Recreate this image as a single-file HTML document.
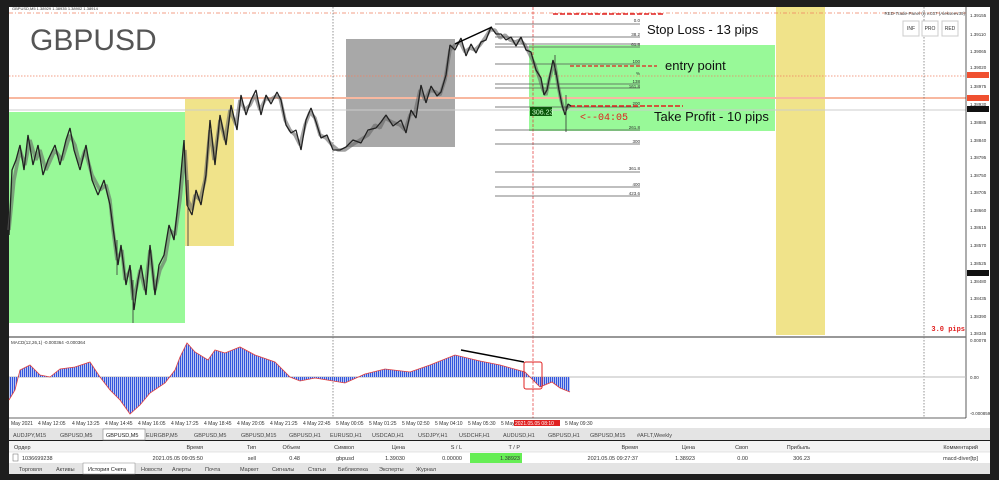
<!DOCTYPE html>
<html><head><meta charset="utf-8"><style>
body{margin:0;width:999px;height:480px;overflow:hidden;background:#1e1e1e;font-family:"Liberation Sans",sans-serif}
svg{position:absolute;left:0;top:0}
</style></head><body>
<svg width="999" height="480" viewBox="0 0 999 480" xmlns="http://www.w3.org/2000/svg" font-family="Liberation Sans, sans-serif">
<defs>
<pattern id="hs" width="2" height="10" patternUnits="userSpaceOnUse"><rect width="1.1" height="10" fill="#3355dd"/><rect x="1.1" width="0.9" height="10" fill="#b5c3f2"/></pattern>
</defs>
<rect x="0" y="0" width="999" height="480" fill="#1e1e1e"/>
<rect x="9" y="7" width="981" height="421" fill="#fff"/>
<rect x="9" y="112" width="176" height="211" fill="#98f998"/>
<rect x="185" y="98" width="49" height="148" fill="#f0e38a"/>
<rect x="346" y="39" width="109" height="108" fill="#a8a8a8"/>
<rect x="529" y="45" width="246" height="86" fill="#98f998"/>
<rect x="776" y="7" width="49" height="328" fill="#f0e38a"/>
<line x1="9" y1="13" x2="966" y2="13" stroke="#f08060" stroke-width="0.8" stroke-dasharray="4,2,1,2"/>
<line x1="9" y1="76" x2="966" y2="76" stroke="#f08060" stroke-width="0.8" stroke-dasharray="1.5,1.5"/>
<line x1="9" y1="98" x2="966" y2="98" stroke="#f8b8a0" stroke-width="2"/>
<line x1="9" y1="110" x2="966" y2="110" stroke="#cccccc" stroke-width="1"/>
<line x1="333" y1="7" x2="333" y2="418" stroke="#666" stroke-width="0.7" stroke-dasharray="1.5,1.5"/>
<line x1="924" y1="7" x2="924" y2="418" stroke="#666" stroke-width="0.7" stroke-dasharray="1.5,1.5"/>
<line x1="533" y1="7" x2="533" y2="418" stroke="#e03030" stroke-width="0.7" stroke-dasharray="3,1.5"/>
<g stroke="#555" stroke-width="0.8">
<line x1="495" y1="24" x2="640" y2="24"/><line x1="495" y1="37" x2="640" y2="37"/><line x1="495" y1="44" x2="640" y2="44"/><line x1="495" y1="47" x2="640" y2="47"/><line x1="495" y1="64" x2="640" y2="64"/><line x1="495" y1="84" x2="640" y2="84"/><line x1="495" y1="88" x2="640" y2="88"/><line x1="495" y1="107" x2="640" y2="107"/><line x1="495" y1="130" x2="640" y2="130"/><line x1="495" y1="144" x2="640" y2="144"/><line x1="495" y1="172" x2="640" y2="172"/><line x1="495" y1="187" x2="640" y2="187"/><line x1="495" y1="196" x2="640" y2="196"/>
</g>
<g font-size="4.5" fill="#333" text-anchor="end">
<text x="640" y="22">0.0</text><text x="640" y="36">38.2</text><text x="640" y="46">61.8</text><text x="640" y="63">100</text><text x="640" y="75">%</text><text x="640" y="83">138</text><text x="640" y="88">161.8</text><text x="640" y="105">200</text><text x="640" y="129">261.8</text><text x="640" y="143">300</text><text x="640" y="170">361.8</text><text x="640" y="186">400</text><text x="640" y="195">423.6</text>
</g>
<line x1="553" y1="14" x2="665" y2="14" stroke="#e02020" stroke-width="1.6" stroke-dasharray="5,2"/>
<line x1="570" y1="66" x2="657" y2="66" stroke="#e02020" stroke-width="1.2" stroke-dasharray="4,2"/>
<line x1="570" y1="106" x2="683" y2="106" stroke="#e02020" stroke-width="1.6" stroke-dasharray="5,2"/>
<g fill="none" stroke-linejoin="bevel">
<polyline stroke="#666" stroke-width="3.5" opacity="0.6" points="9,230 14,180 20,150 25,165 30,140 36,160 40,150 46,170 55,150 62,160 70,135 75,145 80,165 85,150 92,175 100,190 106,185 110,200 113,230 117,260 122,250 125,280 130,270 133,300 137,285 140,270 145,290 150,250 155,290 160,270 165,260 170,230 175,235 180,200 185,150 188,200 192,210 195,195 200,200 205,180 210,130 214,160 220,120 225,140 230,110 236,125 240,100 245,110 250,105 255,95 260,110 266,98 270,100 276,96 280,98 285,120 290,130 295,135 300,145 305,125 310,112 315,118 320,135 326,138 332,145 338,150 345,150 352,145 360,140 368,135 375,125 380,128 385,118 392,122 400,125 405,130 410,115 415,112 420,90 425,100 430,90 436,92 440,95 445,80 450,50 455,45 460,42 465,52 470,48 475,50 480,45 485,38 490,30 495,30 500,38 505,35 510,40 515,42 520,40 525,45 530,55 535,65 540,80 543,90 546,95 549,80 552,70 555,65 558,85 561,100 564,110 567,108 570,105"/>
<polyline stroke="#222" stroke-width="1.3" points="9,235 12,170 16,160 20,145 24,170 28,135 33,165 38,145 43,175 48,160 55,145 60,165 66,140 70,128 74,150 80,170 86,145 92,180 98,195 104,180 110,205 114,235 118,265 121,245 126,285 130,265 134,310 138,280 141,265 146,295 150,245 155,295 159,265 164,255 169,225 174,240 179,195 184,140 187,205 192,215 196,190 201,205 206,175 210,120 215,165 220,115 226,145 231,105 237,130 241,95 246,115 251,100 256,90 261,115 266,95 271,104 277,92 281,100 286,125 291,133 296,130 301,150 306,120 311,108 316,122 321,138 327,135 333,150 340,150 346,147 353,140 361,143 368,130 376,128 381,122 386,115 393,126 401,120 406,133 411,110 416,118 421,85 426,103 431,86 437,96 441,92 446,75 450,45 455,50 461,38 466,56 471,44 476,53 481,42 486,40 491,27 496,34 501,34 506,40 511,37 516,46 521,37 526,50 531,52 536,70 541,78 544,95 547,90 550,75 553,60 556,72 559,90 562,105 565,115 568,104 571,106"/>
</g>
<g stroke="#333" stroke-width="0.8">
<line x1="133" y1="280" x2="133" y2="323"/><line x1="117" y1="240" x2="117" y2="275"/><line x1="188" y1="180" x2="188" y2="246"/><line x1="566" y1="95" x2="566" y2="132"/><line x1="555" y1="55" x2="555" y2="75"/>
</g>
<line x1="455" y1="44" x2="492" y2="27" stroke="#000" stroke-width="1.5"/>
<text x="30" y="50" font-size="30" fill="#555">GBPUSD</text>
<text x="647" y="34" font-size="13" fill="#111">Stop Loss - 13 pips</text>
<text x="665" y="70" font-size="13" fill="#111">entry point</text>
<text x="654" y="121" font-size="13" fill="#111">Take Profit - 10 pips</text>
<text x="580" y="120" font-size="10" fill="#e02020" font-family="Liberation Mono,monospace">&lt;--04:05</text>
<rect x="530" y="107" width="22" height="9" fill="#0a5a0a"/>
<text x="532" y="114.5" font-size="7" fill="#cfc">306.23</text>
<text x="965" y="331" font-size="7" fill="#e02020" font-weight="bold" font-family="Liberation Mono,monospace" text-anchor="end">3.0 pips</text>
<text x="965" y="15" font-size="4.5" fill="#444" text-anchor="end">RED-Trade-Panel (I) v.037 (Alekseev39)</text>
<g font-size="5" fill="#333" text-anchor="middle">
<rect x="903" y="21" width="16" height="15" fill="#fff" stroke="#ccc"/><text x="911" y="30">INF</text>
<rect x="922" y="21" width="16" height="15" fill="#fff" stroke="#ccc"/><text x="930" y="30">PRO</text>
<rect x="942" y="21" width="16" height="15" fill="#fff" stroke="#ccc"/><text x="950" y="30">RED</text>
</g>
<text x="12" y="10" font-size="4" fill="#333">GBPUSD,M5 1.38929 1.38935 1.38902 1.38914</text>
<line x1="966" y1="7" x2="966" y2="418" stroke="#333" stroke-width="0.8"/>
<g font-size="4.5" fill="#333">
<text x="970" y="17">1.39155</text><text x="970" y="36">1.39110</text><text x="970" y="53">1.39065</text><text x="970" y="69">1.39020</text><text x="970" y="88">1.38975</text><text x="970" y="106">1.38930</text><text x="970" y="124">1.38885</text><text x="970" y="142">1.38840</text><text x="970" y="159">1.38795</text><text x="970" y="177">1.38750</text><text x="970" y="194">1.38705</text><text x="970" y="212">1.38660</text><text x="970" y="229">1.38615</text><text x="970" y="247">1.38570</text><text x="970" y="265">1.38525</text><text x="970" y="283">1.38480</text><text x="970" y="300">1.38435</text><text x="970" y="318">1.38390</text><text x="970" y="335">1.38345</text>
</g>
<rect x="967" y="72" width="22" height="6" fill="#f05030"/><rect x="967" y="95" width="22" height="6" fill="#f05030"/><rect x="967" y="106" width="22" height="6" fill="#111"/><rect x="967" y="270" width="22" height="6" fill="#111"/>
<line x1="9" y1="337" x2="966" y2="337" stroke="#777" stroke-width="1.5"/>
<line x1="9" y1="377" x2="966" y2="377" stroke="#bbb" stroke-width="1"/>
<text x="11" y="344" font-size="4.5" fill="#333">MACD(12,26,1) -0.000364 -0.000364</text>
<polygon fill="url(#hs)" points="9,377 9,400 15,390 20,370 30,365 40,375 50,377 60,369 75,367 90,362 100,377 110,390 120,400 130,414 140,405 150,393 165,383 175,370 180,357 187,343 195,352 208,360 215,350 225,353 240,347 255,355 275,362 290,377 300,381 315,378 333,381 345,383 365,374 385,369 410,372 430,365 455,355 480,361 500,365 525,372 540,387 552,382 560,388 570,392 570,377"/>
<polyline fill="none" stroke="#e04040" stroke-width="0.8" points="9,400 15,390 20,370 30,365 40,375 50,377 60,369 75,367 90,362 100,377 110,390 120,400 130,414 140,405 150,393 165,383 175,370 180,357 187,343 195,352 208,360 215,350 225,353 240,347 255,355 275,362 290,377 300,381 315,378 333,381 345,383 365,374 385,369 410,372 430,365 455,355 480,361 500,365 525,372 540,387 552,382 560,388 570,392"/>
<line x1="461" y1="350" x2="524" y2="362" stroke="#000" stroke-width="1.4"/>
<rect x="524" y="362" width="18" height="27" rx="2" fill="none" stroke="#e02020" stroke-width="1"/>
<g font-size="4.5" fill="#333"><text x="970" y="342">0.00078</text><text x="970" y="379">0.00</text><text x="970" y="415">-0.000859</text></g>
<line x1="9" y1="418" x2="966" y2="418" stroke="#333" stroke-width="0.8"/>
<rect x="514" y="420" width="46" height="6" fill="#e02020"/>
<g font-size="5" fill="#333">
<text x="11" y="425">May 2021</text><text x="38" y="425">4 May 12:05</text><text x="72" y="425">4 May 13:25</text><text x="105" y="425">4 May 14:45</text><text x="138" y="425">4 May 16:05</text><text x="171" y="425">4 May 17:25</text><text x="204" y="425">4 May 18:45</text><text x="237" y="425">4 May 20:05</text><text x="270" y="425">4 May 21:25</text><text x="303" y="425">4 May 22:45</text><text x="336" y="425">5 May 00:05</text><text x="369" y="425">5 May 01:25</text><text x="402" y="425">5 May 02:50</text><text x="435" y="425">5 May 04:10</text><text x="468" y="425">5 May 05:30</text><text x="501" y="425">5 May</text><text x="515" y="425" fill="#fff">2021.05.05 08:10</text><text x="565" y="425">5 May 09:30</text>
</g>
<rect x="9" y="428" width="981" height="12" fill="#e4e4e4"/>
<g font-size="5.5" fill="#444">
<text x="13" y="437">AUDJPY,M15</text><text x="60" y="437">GBPUSD,M5</text><text x="146" y="437">EURGBP,M5</text><text x="194" y="437">GBPUSD,M5</text><text x="241" y="437">GBPUSD,M15</text><text x="289" y="437">GBPUSD,H1</text><text x="330" y="437">EURUSD,H1</text><text x="372" y="437">USDCAD,H1</text><text x="418" y="437">USDJPY,H1</text><text x="459" y="437">USDCHF,H1</text><text x="503" y="437">AUDUSD,H1</text><text x="548" y="437">GBPUSD,H1</text><text x="590" y="437">GBPUSD,M15</text><text x="637" y="437">#AFLT,Weekly</text>
</g>
<rect x="103" y="429" width="42" height="11" fill="#fff" stroke="#888" stroke-width="0.6"/>
<text x="106" y="437" font-size="5.5" fill="#222">GBPUSD,M5</text>
<rect x="9" y="441" width="981" height="33" fill="#f4f4f4"/>
<rect x="9" y="452" width="981" height="11" fill="#fff"/>
<line x1="9" y1="452" x2="990" y2="452" stroke="#ccc" stroke-width="0.6"/>
<rect x="470" y="453" width="52" height="10" fill="#66ee55"/>
<g font-size="5.5" fill="#333">
<text x="14" y="449">Ордер</text><text x="203" y="449" text-anchor="end">Время</text><text x="256" y="449" text-anchor="end">Тип</text><text x="300" y="449" text-anchor="end">Объем</text><text x="354" y="449" text-anchor="end">Символ</text><text x="405" y="449" text-anchor="end">Цена</text><text x="462" y="449" text-anchor="end">S / L</text><text x="520" y="449" text-anchor="end">T / P</text><text x="638" y="449" text-anchor="end">Время</text><text x="695" y="449" text-anchor="end">Цена</text><text x="748" y="449" text-anchor="end">Своп</text><text x="810" y="449" text-anchor="end">Прибыль</text><text x="978" y="449" text-anchor="end">Комментарий</text>
<text x="22" y="460">1036699238</text><text x="203" y="460" text-anchor="end">2021.05.05 09:05:50</text><text x="256" y="460" text-anchor="end">sell</text><text x="300" y="460" text-anchor="end">0.48</text><text x="354" y="460" text-anchor="end">gbpusd</text><text x="405" y="460" text-anchor="end">1.39030</text><text x="462" y="460" text-anchor="end">0.00000</text><text x="520" y="460" text-anchor="end">1.38923</text><text x="638" y="460" text-anchor="end">2021.05.05 09:27:37</text><text x="695" y="460" text-anchor="end">1.38923</text><text x="748" y="460" text-anchor="end">0.00</text><text x="810" y="460" text-anchor="end">306.23</text><text x="978" y="460" text-anchor="end">macd-diver[tp]</text>
</g>
<rect x="13" y="454" width="5" height="7" fill="#fff" stroke="#666" stroke-width="0.5"/>
<rect x="9" y="463" width="981" height="11" fill="#e4e4e4"/>
<rect x="83" y="463" width="52" height="11" fill="#fff" stroke="#888" stroke-width="0.5"/>
<g font-size="5.5" fill="#444">
<text x="19" y="471">Торговля</text><text x="56" y="471">Активы</text><text x="88" y="471" fill="#222">История Счета</text><text x="141" y="471">Новости</text><text x="172" y="471">Алерты</text><text x="205" y="471">Почта</text><text x="240" y="471">Маркет</text><text x="272" y="471">Сигналы</text><text x="308" y="471">Статьи</text><text x="338" y="471">Библиотека</text><text x="379" y="471">Эксперты</text><text x="416" y="471">Журнал</text>
</g>
</svg>
</body></html>
